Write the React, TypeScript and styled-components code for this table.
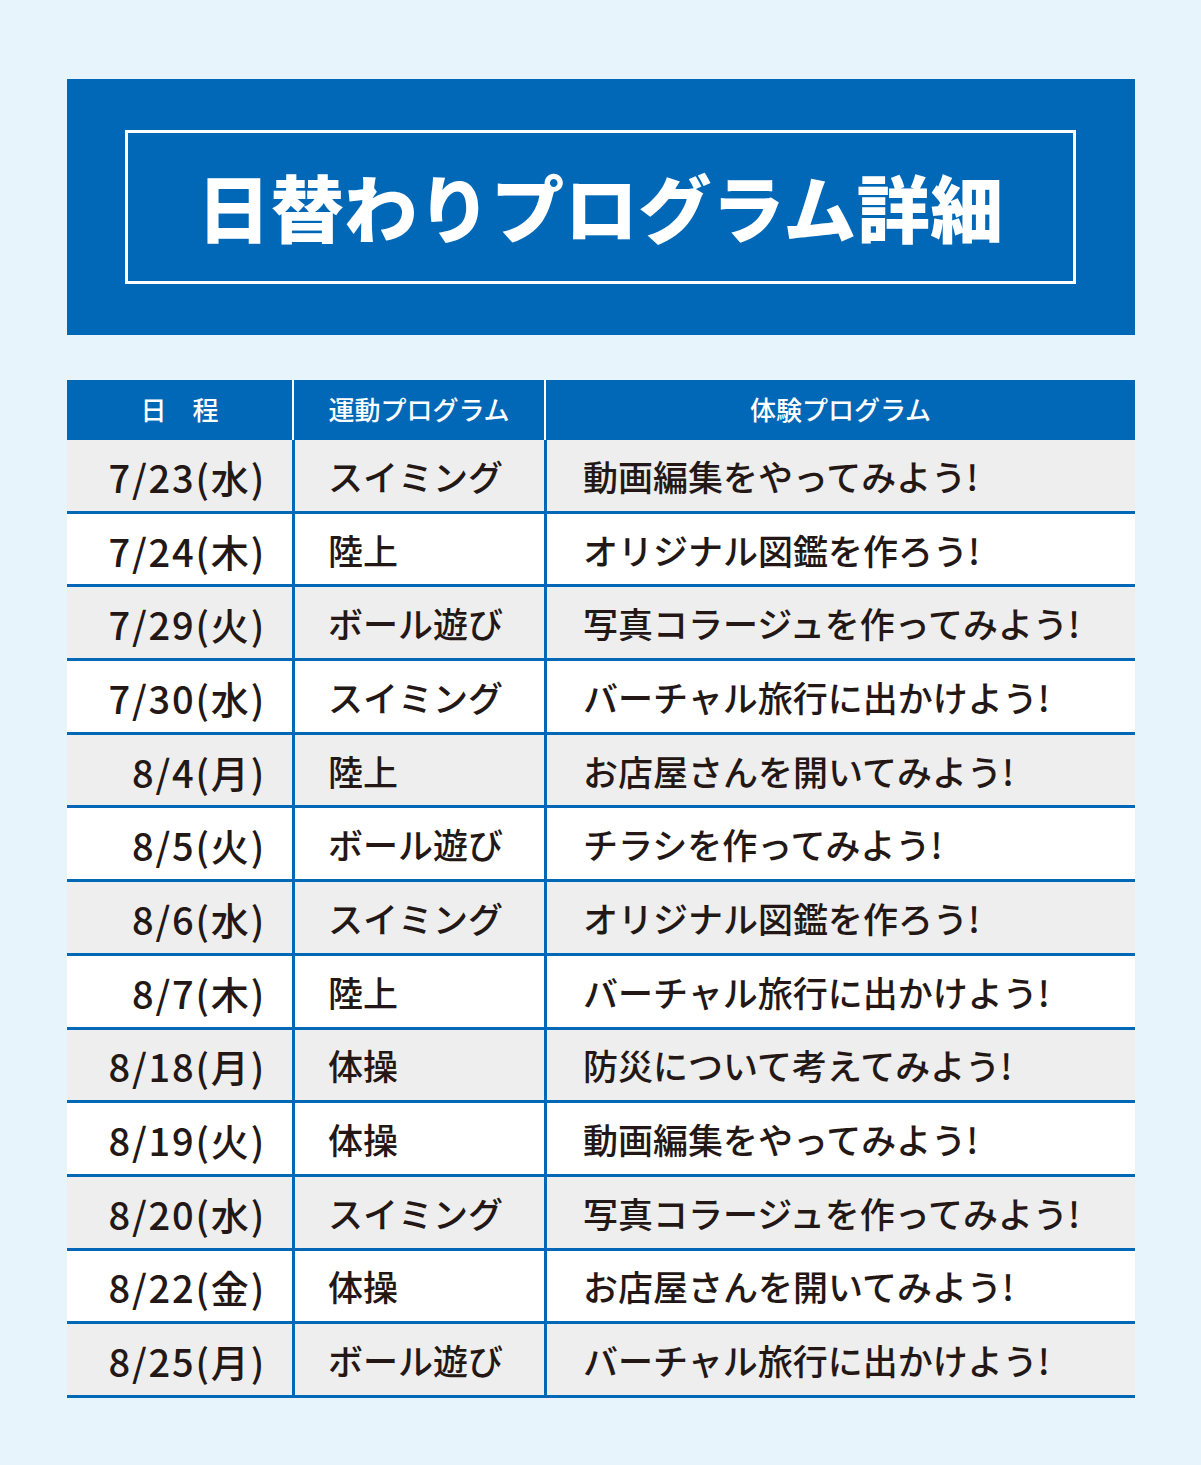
import React from "react";
import styled, { createGlobalStyle } from "styled-components";

const Global = createGlobalStyle`
  html, body { margin: 0; padding: 0; background: #e8f4fc; }
  body { font-family: "Noto Sans CJK JP", "Noto Sans", sans-serif; }
`;

const BLUE = "#0068b7";

const Page = styled.div`
  width: 1201px;
  min-height: 1465px;
  box-sizing: border-box;
  padding: 79px 66px 0 67px;
  background: #e8f4fc;
`;

const Banner = styled.div`
  background: ${BLUE};
  height: 256px;
  box-sizing: border-box;
  padding: 51px 59px 51px 58px;
`;

const TitleBox = styled.div`
  height: 100%;
  box-sizing: border-box;
  border: 3.5px solid #ffffff;
  display: flex;
  align-items: center;
  justify-content: center;
`;

const Title = styled.h1`
  margin: 0;
  color: #ffffff;
  font-family: "Noto Sans CJK JP", sans-serif;
  font-weight: 900;
  font-size: 73px;
  letter-spacing: 0.5px;
  line-height: 1;
  transform: translateY(-2px);
`;

const Table = styled.div`
  margin-top: 45px;
  display: grid;
  grid-template-columns: 225px 252px 1fr;
`;

const HeadCell = styled.div<{ $first?: boolean }>`
  background: ${BLUE};
  height: 60px;
  display: flex;
  align-items: center;
  justify-content: center;
  color: #ffffff;
  font-size: 26px;
  font-weight: 500;
  border-left: ${(p) => (p.$first ? "none" : "2.5px solid #ffffff")};
  box-sizing: border-box;
  padding-bottom: 4px;
`;

const Cell = styled.div<{ $alt: boolean; $first?: boolean; $align: "right" | "left"; $indent?: number }>`
  height: 73.7px;
  box-sizing: border-box;
  background: ${(p) => (p.$alt ? "#eeeeee" : "#ffffff")};
  border-bottom: 3px solid ${BLUE};
  border-left: ${(p) => (p.$first ? "none" : `3px solid ${BLUE}`)};
  display: flex;
  align-items: center;
  justify-content: ${(p) => (p.$align === "right" ? "flex-end" : "flex-start")};
  padding: 0 26px 0 ${(p) => p.$indent ?? 33}px;
  color: #231815;
  font-size: 35px;
  font-weight: 500;
  white-space: nowrap;
`;

const DateText = styled.span`
  font-size: 38px;
  letter-spacing: 1.8px;
  transform: translateY(1px);
`;

const rows: [string, string, string][] = [
  ["7/23(水)", "スイミング", "動画編集をやってみよう!"],
  ["7/24(木)", "陸上", "オリジナル図鑑を作ろう!"],
  ["7/29(火)", "ボール遊び", "写真コラージュを作ってみよう!"],
  ["7/30(水)", "スイミング", "バーチャル旅行に出かけよう!"],
  ["8/4(月)", "陸上", "お店屋さんを開いてみよう!"],
  ["8/5(火)", "ボール遊び", "チラシを作ってみよう!"],
  ["8/6(水)", "スイミング", "オリジナル図鑑を作ろう!"],
  ["8/7(木)", "陸上", "バーチャル旅行に出かけよう!"],
  ["8/18(月)", "体操", "防災について考えてみよう!"],
  ["8/19(火)", "体操", "動画編集をやってみよう!"],
  ["8/20(水)", "スイミング", "写真コラージュを作ってみよう!"],
  ["8/22(金)", "体操", "お店屋さんを開いてみよう!"],
  ["8/25(月)", "ボール遊び", "バーチャル旅行に出かけよう!"],
];

export default function App() {
  return (
    <Page>
      <Global />
      <Banner>
        <TitleBox>
          <Title>日替わりプログラム詳細</Title>
        </TitleBox>
      </Banner>
      <Table>
        <HeadCell $first>日　程</HeadCell>
        <HeadCell>運動プログラム</HeadCell>
        <HeadCell>体験プログラム</HeadCell>
        {rows.map(([d, s, e], i) => (
          <React.Fragment key={i}>
            <Cell $alt={i % 2 === 0} $first $align="right">
              <DateText>{d}</DateText>
            </Cell>
            <Cell $alt={i % 2 === 0} $align="left">{s}</Cell>
            <Cell $alt={i % 2 === 0} $align="left" $indent={36}>{e}</Cell>
          </React.Fragment>
        ))}
      </Table>
    </Page>
  );
}
